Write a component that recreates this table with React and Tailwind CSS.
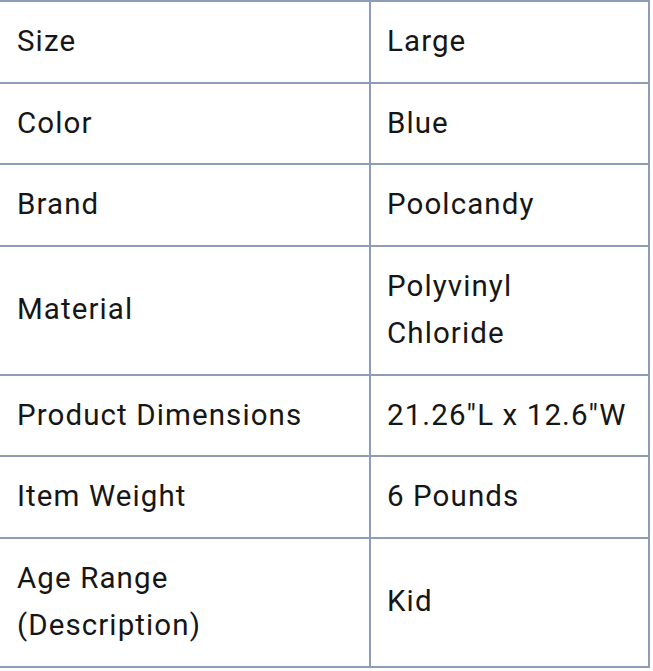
const rows = [
  ['Size', 'Large'],
  ['Color', 'Blue'],
  ['Brand', 'Poolcandy'],
  ['Material', 'Polyvinyl Chloride'],
  ['Product Dimensions', '21.26"L x 12.6"W'],
  ['Item Weight', '6 Pounds'],
  ['Age Range (Description)', 'Kid'],
];

export default function App() {
  return (
    <div className="h-[671px] w-[653px] overflow-hidden bg-white" style={{ fontFamily: 'Roboto, "Liberation Sans", sans-serif' }}>
      <table className="-ml-[2px] w-[652px] table-fixed border-collapse border-2 border-[#8e9db7] text-[29.5px] leading-[47.5px] tracking-[1.1px] text-[#161616]">
        <colgroup>
          <col className="w-[371px]" />
          <col />
        </colgroup>
        <tbody>
          {rows.map(([k, v]) => (
            <tr key={k}>
              <td className="border-2 border-[#8e9db7] py-4 pr-4 pl-[17px] align-middle">{k}</td>
              <td className="border-2 border-[#8e9db7] px-4 py-4 align-middle">{v}</td>
            </tr>
          ))}
        </tbody>
      </table>
    </div>
  );
}
